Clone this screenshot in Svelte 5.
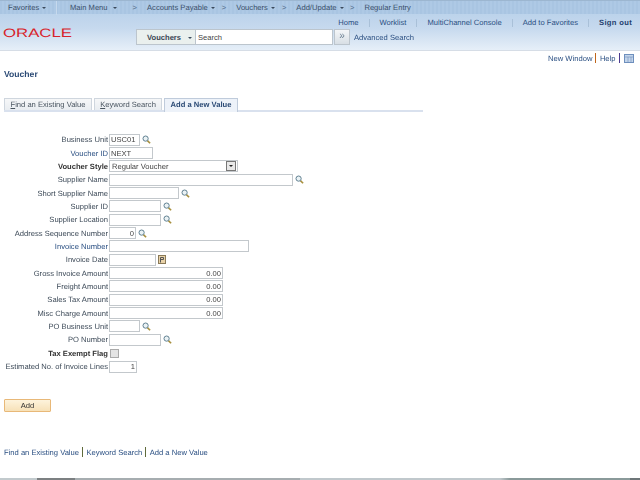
<script>
	const crumbs = [
		{ label: 'Main Menu', gap: 5, next: 16, arrow: true },
		{ label: 'Accounts Payable', gap: 3, next: 7, arrow: true },
		{ label: 'Vouchers', gap: 3, next: 7, arrow: true },
		{ label: 'Add/Update', gap: 4, next: 5.5, arrow: true },
		{ label: 'Regular Entry', arrow: false }
	];

	const topLinks = ['Home', 'Worklist', 'MultiChannel Console', 'Add to Favorites'];

	const rows = [
		{ label: 'Business Unit', width: 31, value: 'USC01', lookup: true },
		{ label: 'Voucher ID', width: 44, value: 'NEXT', link: true },
		{ label: 'Voucher Style', kind: 'select', bold: true },
		{ label: 'Supplier Name', width: 184, lookup: true },
		{ label: 'Short Supplier Name', width: 70, lookup: true },
		{ label: 'Supplier ID', width: 52, lookup: true },
		{ label: 'Supplier Location', width: 52, lookup: true },
		{ label: 'Address Sequence Number', width: 27, value: '0', num: true, lookup: true },
		{ label: 'Invoice Number', width: 140, link: true },
		{ label: 'Invoice Date', width: 47, kind: 'date' },
		{ label: 'Gross Invoice Amount', width: 114, value: '0.00', num: true },
		{ label: 'Freight Amount', width: 114, value: '0.00', num: true },
		{ label: 'Sales Tax Amount', width: 114, value: '0.00', num: true },
		{ label: 'Misc Charge Amount', width: 114, value: '0.00', num: true },
		{ label: 'PO Business Unit', width: 31, lookup: true },
		{ label: 'PO Number', width: 52, lookup: true },
		{ label: 'Tax Exempt Flag', kind: 'check', bold: true },
		{ label: 'Estimated No. of Invoice Lines', width: 28, value: '1', num: true }
	];
</script>

{#snippet lookup()}
	<svg class="lookup" viewBox="0 0 10 10" width="9" height="9" aria-hidden="true">
		<path d="M6 6.2 9 9.2" stroke="#a8903f" stroke-width="1.8" />
		<circle cx="4" cy="4" r="2.9" fill="#eaf2f5" stroke="#5f8090" stroke-width="1.1" />
	</svg>
{/snippet}

<div class="page">
	<header>
		<nav class="crumbs">
			<span class="fav">Favorites <i class="caret"></i></span>
			<span class="rule"></span>
			{#each crumbs as c}
				<span>{c.label}</span>
				{#if c.arrow}
					<i class="caret" style="margin-left: {c.gap}px"></i>
					<span class="chev" style="margin-left: {c.next}px">&gt;</span>
				{/if}
			{/each}
		</nav>

		<div class="top-links">
			{#each topLinks as link}
				<a href="#top">{link}</a>
				<span class="sep"></span>
			{/each}
			<a class="signout" href="#top">Sign out</a>
		</div>

		<div class="search-row">
			<svg class="logo" viewBox="0 0 70 14" width="70" height="14" role="img" aria-label="Oracle">
				<text x="0" y="9.5" textLength="69" lengthAdjust="spacingAndGlyphs">ORACLE</text>
			</svg>
			<div class="scope">Vouchers <i class="caret"></i></div>
			<input class="search" value="Search" />
			<button class="go" aria-label="Go">»</button>
			<a class="advanced" href="#top">Advanced Search</a>
		</div>
	</header>

	<div class="page-links">
		<a href="#top">New Window</a>
		<span class="bar orange"></span>
		<a href="#top">Help</a>
		<span class="bar purple"></span>
		<svg viewBox="0 0 10 9" width="10" height="9" aria-hidden="true">
			<rect x=".5" y=".5" width="9" height="8" fill="#c3d5ea" stroke="#6e8fbd" />
			<path d="M1 3h8M4 3v5M7 3v5" stroke="#6e8fbd" stroke-width=".6" />
		</svg>
	</div>

	<h1>Voucher</h1>

	<div class="tabs">
		<span class="tab" style="width: 88px"><u>F</u>ind an Existing Value</span>
		<span class="tab" style="width: 68px"><u>K</u>eyword Search</span>
		<span class="tab active" style="width: 74px">Add a New Value</span>
	</div>

	<form class="fields">
		{#each rows as row}
			<label class:bold={row.bold} class:link={row.link} for={row.label}>{row.label}</label>
			<div class="cell">
				{#if row.kind === 'select'}
					<div class="select">
						<span>Regular Voucher</span>
						<i class="select-btn"><i class="down"></i></i>
					</div>
				{:else if row.kind === 'check'}
					<input class="check" id={row.label} type="checkbox" />
				{:else}
					<input
						id={row.label}
						class="field"
						class:num={row.num}
						style="width: {row.width}px"
						value={row.value ?? ''}
					/>
					{#if row.lookup}
						<span class="icon-gap">{@render lookup()}</span>
					{/if}
					{#if row.kind === 'date'}
						<svg class="cal" viewBox="0 0 8 9" width="8" height="9" aria-hidden="true">
							<rect x=".5" y=".5" width="7" height="8" fill="#e8d2a8" stroke="#8a7a58" />
							<path d="M2.5 2.5v5M2.5 2.5h3v2h-3" fill="none" stroke="#555" />
						</svg>
					{/if}
				{/if}
			</div>
		{/each}
	</form>

	<button class="add">Add</button>

	<div class="bottom-links">
		<a href="#top">Find an Existing Value</a>
		<span class="bar olive"></span>
		<a href="#top">Keyword Search</a>
		<span class="bar olive"></span>
		<a href="#top">Add a New Value</a>
	</div>

	<div class="edge"></div>
</div>

<style>
	:global(body) {
		margin: 0;
		background: #fff;
	}

	.page {
		display: flex;
		flex-direction: column;
		width: 640px;
		height: 480px;
		overflow: hidden;
		font-family: 'Liberation Sans', Arial, sans-serif;
		font-size: 7.6px;
		text-rendering: geometricPrecision;
		color: #333;
		filter: blur(0.35px);
	}

	a {
		color: #2a4f82;
		text-decoration: none;
	}

	header {
		height: 51px;
		box-sizing: border-box;
		border-bottom: 1px solid #d6dde6;
		background: linear-gradient(#bcd3eb 14px, #c6d9ee 28px, #e6eff8 50px);
	}

	.crumbs {
		display: flex;
		align-items: center;
		height: 14px;
		padding-left: 8px;
		color: #3a4f6a;
		background: repeating-linear-gradient(90deg, #a9c5e2 0 2px, #aec9e5 2px 4px);
		border-top: 1px solid #9cb6d0;
		box-sizing: border-box;
	}

	.fav {
		width: 48px;
		white-space: nowrap;
	}

	.rule {
		width: 1px;
		height: 14px;
		margin-right: 13px;
		background: #c6d9ed;
	}

	.caret {
		display: inline-block;
		border: 2px solid transparent;
		border-top: 2.5px solid #3b4a5c;
		border-bottom: 0;
		vertical-align: 1px;
	}

	.fav .caret {
		margin-left: 1px;
	}

	.chev {
		margin-right: 10px;
		color: #5a7390;
	}

	.top-links {
		display: flex;
		justify-content: flex-end;
		align-items: center;
		height: 13px;
		margin-top: 2px;
		padding-right: 8px;
	}

	.sep {
		width: 1px;
		height: 8px;
		margin: 0 10px;
		background: #a9c0d8;
	}

	.signout {
		font-weight: bold;
		letter-spacing: 0.33px;
		color: #1f3f6e;
	}

	.search-row {
		display: flex;
		align-items: center;
		height: 16px;
	}

	.logo {
		flex: none;
		margin: 0 63px 7px 3px;
		overflow: visible;
	}

	.logo text {
		font-size: 12.2px;
		fill: #d8232a;
	}

	.scope {
		width: 60px;
		height: 16px;
		box-sizing: border-box;
		padding: 3px 0 0 10px;
		border: 1px solid #bcc5cd;
		background: #eaf0ee;
		font-weight: bold;
		color: #3a4654;
		white-space: nowrap;
	}

	.scope .caret {
		margin-left: 5px;
	}

	.search {
		width: 137px;
		height: 16px;
		box-sizing: border-box;
		padding: 0 2px;
		border: 1px solid #bcc5cd;
		border-left: 0;
		font: inherit;
		color: #444;
		outline: 0;
	}

	.go {
		width: 16px;
		height: 16px;
		padding: 0 0 2px;
		margin-left: 1px;
		border: 1px solid #bcc5cd;
		background: linear-gradient(#f4f6f8, #d8dfe5);
		font-size: 10px;
		line-height: 1;
		color: #6b7f92;
	}

	.advanced {
		margin-left: 4px;
	}

	.page-links {
		display: flex;
		justify-content: flex-end;
		align-items: center;
		height: 12px;
		margin-top: 1px;
		padding-right: 6px;
	}

	.bar {
		width: 1px;
		height: 10px;
		margin: 0 3px;
	}

	.orange {
		background: #c0651a;
		margin-right: 3.5px;
	}

	.purple {
		background: #4c3a90;
		margin: 0 4px 0 3.5px;
	}

	.olive {
		background: #5f6a3a;
		margin-right: 3.5px;
	}

	h1 {
		margin: 5px 0 0 4px;
		font-size: 8.6px;
		line-height: 11px;
		font-weight: bold;
		color: #2b4a75;
	}

	.tabs {
		display: flex;
		gap: 2px;
		width: 419px;
		height: 14px;
		box-sizing: border-box;
		margin: 18px 0 0 4px;
		border-bottom: 2px solid #d9e1ee;
	}

	.tab {
		box-sizing: border-box;
		height: 12px;
		border: 1px solid #cfd6de;
		border-bottom: 0;
		background: linear-gradient(#f6f7f8, #e9edf1);
		line-height: 12px;
		text-align: center;
		color: #4a5560;
	}

	.tab.active {
		height: 14px;
		background: #edf2f9;
		font-weight: bold;
		color: #2b4a75;
		border-color: #bfcbdb;
	}

	.fields {
		display: grid;
		grid-template-columns: 108px 1fr;
		grid-auto-rows: 13.35px;
		column-gap: 1px;
		margin-top: 21px;
	}

	label {
		align-self: center;
		text-align: right;
		white-space: nowrap;
		color: #3d4a58;
	}

	label.bold {
		font-weight: bold;
		color: #333;
	}

	label.link {
		color: #2a4f82;
	}

	.cell {
		display: flex;
		align-items: center;
		min-width: 0;
	}

	.field {
		height: 12px;
		box-sizing: border-box;
		padding: 0 1px;
		border: 1px solid #c3c8cc;
		font: inherit;
		color: #444;
		background: #fff;
		outline: 0;
	}

	.num {
		text-align: right;
	}

	.icon-gap {
		display: flex;
		margin-left: 1.5px;
	}

	.lookup {
		display: block;
	}

	.cal {
		margin-left: 2px;
	}

	.select {
		display: flex;
		justify-content: space-between;
		align-items: center;
		width: 129px;
		height: 12px;
		box-sizing: border-box;
		padding-left: 2px;
		border: 1px solid #c3c8cc;
		color: #444;
	}

	.select-btn {
		display: flex;
		align-items: center;
		justify-content: center;
		width: 10px;
		height: 10px;
		box-sizing: border-box;
		margin-right: 1px;
		border: 1px solid #777;
		background: #e8e8e8;
	}

	.down {
		border: 2px solid transparent;
		border-top: 2.5px solid #222;
		border-bottom: 0;
	}

	.check {
		appearance: none;
		width: 9px;
		height: 9px;
		margin: 0 0 0 1px;
		border: 1px solid #aaa;
		background: #e4e4e4;
	}

	.add {
		align-self: flex-start;
		width: 47px;
		height: 13px;
		margin: 26px 0 0 4px;
		padding: 0;
		border: 1px solid #e8b878;
		border-radius: 1px;
		background: linear-gradient(#fdf3dc, #f7e1b8);
		font: inherit;
		color: #333;
	}

	.bottom-links {
		display: flex;
		align-items: center;
		margin: 34px 0 0 4px;
		height: 12px;
	}

	.edge {
		height: 2px;
		margin-top: auto;
		background: linear-gradient(90deg, #c2cacd 0 37px, #7c8082 37px 75px, #a6adb0 75px 300px, #c0c8cc 300px 500px, #8a9a9a 510px 630px, #6d7678 630px);
	}
</style>
